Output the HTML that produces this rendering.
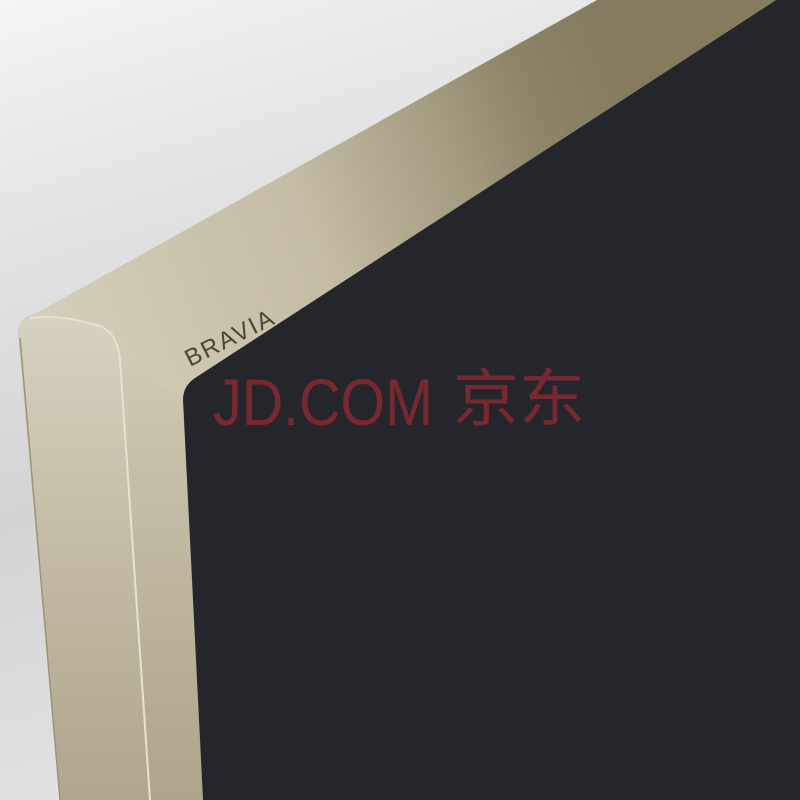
<!DOCTYPE html>
<html><head><meta charset="utf-8"><style>html,body{margin:0;padding:0;width:800px;height:800px;overflow:hidden}</style></head><body>
<svg width="800" height="800" viewBox="0 0 800 800" xmlns="http://www.w3.org/2000/svg">
<defs>
<linearGradient id="bg" x1="0" y1="0" x2="0.3" y2="1">
<stop offset="0" stop-color="#f4f4f4"/><stop offset="0.3" stop-color="#e2e2e2"/><stop offset="0.6" stop-color="#d4d4d4"/><stop offset="1" stop-color="#e4e4e4"/>
</linearGradient>
<linearGradient id="face" x1="0" y1="0.3" x2="0.75" y2="0">
<stop offset="0" stop-color="#d4cdb9"/><stop offset="0.45" stop-color="#c4bca4"/><stop offset="0.7" stop-color="#a59d80"/><stop offset="0.85" stop-color="#8e8568"/><stop offset="1" stop-color="#857c5f"/>
</linearGradient>
<linearGradient id="side" x1="0" y1="0" x2="0" y2="1">
<stop offset="0" stop-color="#d6d1c1"/><stop offset="0.5" stop-color="#c2baa3"/><stop offset="1" stop-color="#afa68c"/>
</linearGradient>
<linearGradient id="front" x1="0" y1="0" x2="0" y2="1">
<stop offset="0" stop-color="#cfc8b3"/><stop offset="0.5" stop-color="#bdb59d"/><stop offset="1" stop-color="#aea58b"/>
</linearGradient>
</defs>
<rect width="800" height="800" fill="url(#bg)"/>
<path d="M35,314 L597,0 L776,0 L195,378 Q183,386 183,400 L203,800 L60,800 L18,335 Q17,318 35,314 Z" fill="url(#face)"/>
<path d="M120,360 L183,400 L203,800 L150,800 Z" fill="url(#front)"/>
<path d="M30,318 Q60,314 100,326 Q118,334 120,360 L150,800 L60,800 L20,338 Q20,322 30,318 Z" fill="url(#side)"/>
<path d="M30,318 Q60,314 100,326 Q118,334 120,360 L150,800" fill="none" stroke="#e6e1d2" stroke-width="2"/>
<path d="M20,338 L60,800" stroke="#9c9479" stroke-width="1.5"/>
<path d="M776,0 L800,0 L800,800 L203,800 L183,400 Q183,386 195,378 Z" fill="#25262c"/>
<text x="0" y="0" transform="translate(190,367) rotate(-27)" font-family="Liberation Sans, sans-serif" font-size="24" fill="#4a4536" textLength="96" lengthAdjust="spacing">BRAVIA</text>
<text x="213" y="425" font-family="Liberation Sans, sans-serif" font-size="66" fill="#7a2830" textLength="220" lengthAdjust="spacingAndGlyphs">JD.COM</text>
<text x="453" y="420" font-family="Liberation Sans, 'Noto Sans CJK SC', sans-serif" font-size="62" fill="#7a2830" textLength="132" lengthAdjust="spacingAndGlyphs">京东</text>
</svg>
</body></html>
